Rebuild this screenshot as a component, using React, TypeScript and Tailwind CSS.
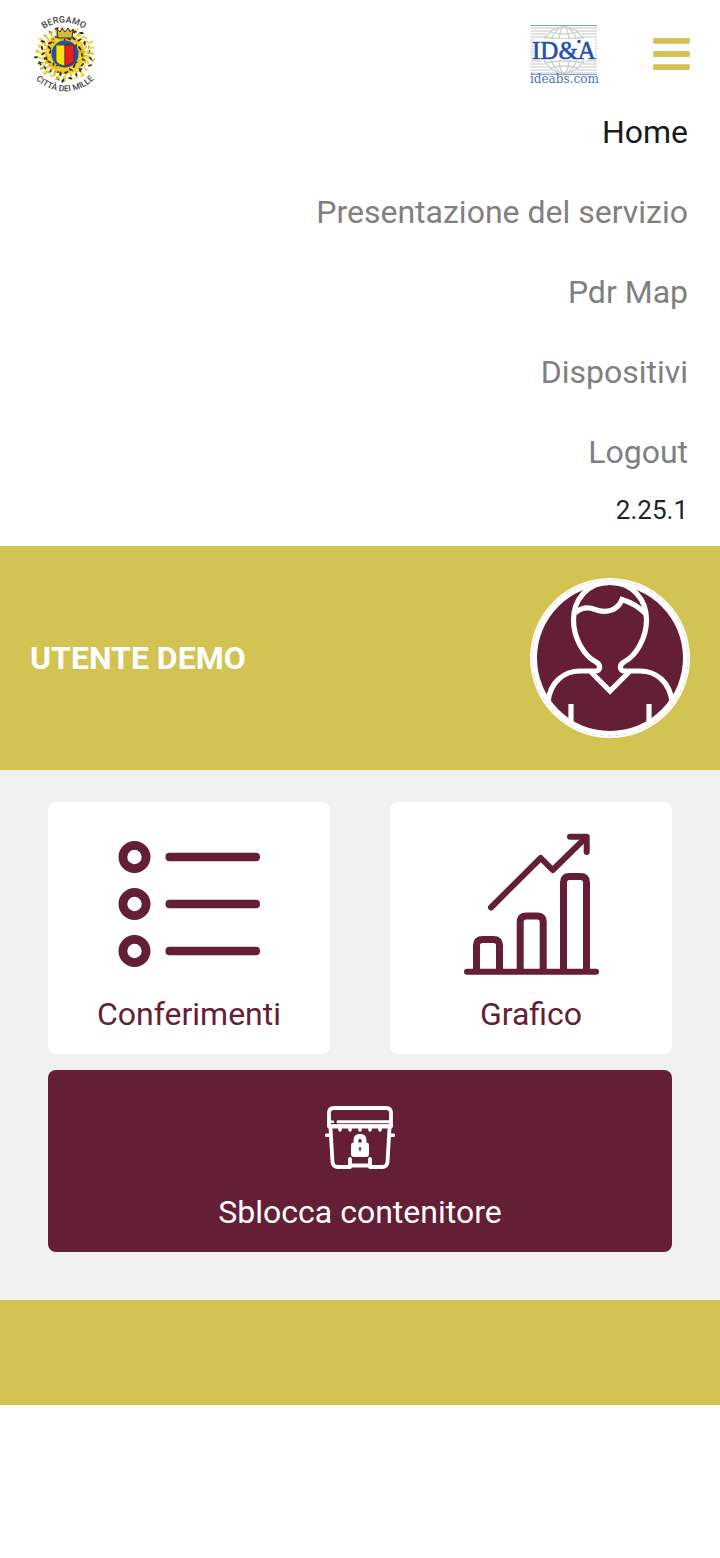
import React from 'react';
import { FaBars } from 'react-icons/fa';

interface NavLink {
  label: string;
  active?: boolean;
}

const navLinks: NavLink[] = [
  { label: 'Home', active: true },
  { label: 'Presentazione del servizio' },
  { label: 'Pdr Map' },
  { label: 'Dispositivi' },
  { label: 'Logout' },
];

const leafColors = ['#f2d22e', '#f5dc4a', '#2a2618', '#e9c92a', '#f2d22e', '#d9b41c', '#4a4228'];

// oak and laurel wreath around the shield
const leaves = Array.from({ length: 190 }, (_, i) => {
  const angle = i * 2.4;
  const radius = 14 + ((i * 37) % 16);
  return {
    x: 33 + radius * Math.cos(angle),
    y: 39 + radius * 0.92 * Math.sin(angle),
    turn: (i * 67) % 180,
    color: leafColors[i % leafColors.length],
  };
});

const CityCrest: React.FC = () => (
  <svg viewBox="0 0 66 80" className="h-20 w-[66px]" role="img" aria-label="Comune di Bergamo">
    <defs>
      <path id="crest-top" d="M3 24 A35 35 0 0 1 61 24" />
      <path id="crest-bottom" d="M1 62 A41 41 0 0 0 65 62" />
    </defs>
    <g transform="translate(0 1)">
      <circle cx="33" cy="39" r="20" fill="#e9c92a" />
      {leaves.map((leaf, i) => (
        <ellipse
          key={i}
          cx={leaf.x}
          cy={leaf.y}
          rx="2.3"
          ry="1"
          fill={leaf.color}
          transform={`rotate(${leaf.turn} ${leaf.x} ${leaf.y})`}
        />
      ))}
      <path d="M25 14 l3 3 2-4 3 4 3-4 2 4 3-3 -1 9 h-14z" fill="#d9b93a" stroke="#333" strokeWidth="1" />
      <circle cx="33" cy="39" r="13.5" fill="#2450a5" />
      <path d="M24 30 H33 V51 C28 50 24 48 24 44z" fill="#fbe20a" stroke="#5b4a20" strokeWidth="0.8" />
      <path d="M33 30 H42 V44 C42 48 38 50 33 51z" fill="#ec1c24" stroke="#5b2020" strokeWidth="0.8" />
    </g>
    <text fontFamily="Roboto, sans-serif" fontSize="9" fontWeight="500" fill="#444" textAnchor="middle">
      <textPath href="#crest-top" startOffset="50%">BERGAMO</textPath>
    </text>
    <text fontFamily="Roboto, sans-serif" fontSize="8.5" fontWeight="500" fill="#444" textAnchor="middle">
      <textPath href="#crest-bottom" startOffset="50%">CITTÀ DEI MILLE</textPath>
    </text>
  </svg>
);

const IdeabsLogo: React.FC = () => (
  <svg viewBox="0 0 70 62" className="h-[62px] w-[70px]" role="img" aria-label="ID&A ideabs.com">
    {Array.from({ length: 16 }, (_, i) => (
      <path key={i} d={`M0.5 ${5 + i * 3} H67`} stroke="#d8d8d8" strokeWidth="1.4" />
    ))}
    <ellipse cx="34" cy="27" rx="25" ry="23" fill="#fff" />
    <g fill="none" stroke="#cfcfcf" strokeWidth="1.3">
      <ellipse cx="34" cy="27" rx="22" ry="23" />
      <ellipse cx="34" cy="27" rx="14" ry="23" />
      <ellipse cx="34" cy="27" rx="6" ry="23" />
      <path d="M20 9 Q34 13 48 9 M14 14 Q34 18 54 14 M14 40 Q34 36 54 40 M20 45 Q34 41 48 45" />
    </g>
    <rect x="4" y="16" width="61" height="21" fill="#fff" />
    <path d="M0.5 2.5 H67 M0.5 51.5 H67" stroke="#7d9fd8" strokeWidth="1.2" />
    <text
      x="34"
      y="36"
      fontFamily="'Liberation Serif', serif"
      fontSize="25"
      fill="#2352a8"
      stroke="#2352a8"
      strokeWidth="0.6"
      textAnchor="middle"
    >
      ID&amp;A
    </text>
    <circle cx="49" cy="18.5" r="1.8" fill="#2352a8" />
    <text x="0" y="60" fontFamily="'DejaVu Serif', serif" fontSize="12" fill="#4a72bd">
      ideabs.com
    </text>
  </svg>
);

const Avatar: React.FC = () => (
  <svg viewBox="0 0 160 160" className="size-40 shrink-0" role="img" aria-label="Utente">
    <defs>
      <clipPath id="avatar-clip">
        <circle cx="80" cy="80" r="76" />
      </clipPath>
    </defs>
    <circle cx="80" cy="80" r="80" fill="#fff" />
    <circle cx="80" cy="80" r="78" fill="none" stroke="#cdbcc4" strokeWidth="0.5" strokeDasharray="5 3" />
    <circle cx="80" cy="80" r="73" fill="#641e36" />
    <g fill="none" stroke="#fff" strokeWidth="5.2" clipPath="url(#avatar-clip)">
      <path d="M80 4.5 C57 4.5 43.5 22 43.5 42 C43.500 60 54 78 66 84 C71 87 71 93 65 93 H50 C34 93 20 104 18 124" />
      <path d="M80 4.5 C103 4.5 116.5 22 116.5 42 C116.5 60 106 78 94 84 C89 87 89 93 95 93 H110 C126 93 140 104 142 124" />
      <path d="M45 35 C52 29 59 29 65 31.5 C77 36 88 32 92 21.500 C100 24 108 28 116 36" />
      <path d="M61 94 L80 113 L99 94" />
      <path d="M41 126 V150 M119 126 V150" />
    </g>
  </svg>
);

const ListIcon: React.FC = () => (
  <svg viewBox="0 0 142 140" className="h-[140px] w-[142px]" aria-hidden="true">
    {[23, 70, 117].map((y) => (
      <g key={y}>
        <circle cx="16.5" cy={y} r="11.6" fill="none" stroke="#641e36" strokeWidth="8.8" />
        <rect x="47.5" y={y - 4.3} width="94.5" height="8.6" rx="4" fill="#641e36" />
      </g>
    ))}
  </svg>
);

const ChartIcon: React.FC = () => (
  <svg
    viewBox="0 0 142 140"
    className="h-[140px] w-[142px] overflow-visible"
    fill="none"
    stroke="#641e36"
    strokeLinecap="round"
    strokeLinejoin="round"
    aria-hidden="true"
  >
    <path d="M7 137.7 H136" strokeWidth="6" />
    <g strokeWidth="7" strokeLinecap="butt">
      <path d="M16.5 137 V111.5 Q16.5 105.5 22.5 105.5 H33.5 Q39.5 105.5 39.5 111.5 V137" />
      <path d="M60.2 137 V88 Q60.2 82 66.2 82 H77.2 Q83.2 82 83.2 88 V137" />
      <path d="M103.5 137 V48.5 Q103.5 42.5 109.5 42.5 H120.5 Q126.5 42.5 126.5 48.5 V137" />
    </g>
    <path d="M31 73.5 L80.7 24 L92.7 36 L126 3.3" strokeWidth="6" />
    <path d="M110 2.8 H126.7 V18" strokeWidth="6" />
  </svg>
);

const LockedBinIcon: React.FC = () => (
  <svg
    viewBox="0 0 70 70"
    className="size-[70px]"
    fill="none"
    stroke="#fff"
    strokeWidth="3.8"
    strokeLinecap="round"
    strokeLinejoin="round"
    aria-hidden="true"
  >
    <path d="M4 24.5 V11 Q4 6 9 6 H61 Q66 6 66 11 V24.5 Z" />
    <path d="M13 19.7 H65" strokeWidth="3" />
    <path d="M5 19.7 H8" strokeWidth="2.5" />
    <path d="M5 22.5 H65" strokeWidth="0.8" />
    <path d="M15 25 V28 M25 25 V28 M35 25 V28 M45 25 V28 M55 25 V28" strokeWidth="3.5" />
    <path d="M5.5 26 L7.5 60 Q8 65 13 65 H25 V57 M64.5 26 L62.5 60 Q62 65 57 65 H45 V57" />
    <path d="M25 63.5 H45" strokeWidth="4" />
    <path d="M1.5 33.3 H5 M65 33.3 H68.5" strokeWidth="3.5" />
    <path d="M31 42 V38 Q31 34.5 35 34.5 Q39 34.5 39 38 V42" strokeWidth="4.8" />
    <rect x="26" y="40.5" width="18" height="14.500" rx="3" fill="#fff" stroke="none" />
    <circle cx="35" cy="46.5" r="1.3" fill="#641e36" stroke="none" />
    <path d="M35 47 V49" stroke="#641e36" strokeWidth="1" />
  </svg>
);

const App: React.FC = () => {
  return (
    <div className="bg-white font-['Roboto',sans-serif] text-[32px] leading-[48px]">
      <header>
        <div className="flex items-center justify-between px-[30px] pt-4">
          <a href="#" className="flex h-[76px] items-center pl-0.5">
            <CityCrest />
          </a>
          <div className="flex items-center gap-[53px]">
            <IdeabsLogo />
            <button type="button" aria-label="Menu" aria-expanded="true" className="text-[#d2c353]">
              <FaBars className="h-[42px] w-[37px]" />
            </button>
          </div>
        </div>
        <nav className="px-8 pb-[18px] text-right">
          <ul>
            {navLinks.map((link) => (
              <li key={link.label}>
                <a
                  href="#"
                  aria-current={link.active ? 'page' : undefined}
                  className={`block py-4 ${link.active ? 'text-[#1a1a1a]' : 'text-[#808080]'}`}
                >
                  {link.label}
                </a>
              </li>
            ))}
          </ul>
          <p className="text-[26px] leading-9 text-[#212529]">2.25.1</p>
        </nav>
      </header>

      <main>
        <section className="flex items-center justify-between bg-[#d2c353] px-[30px] py-8">
          <h1 className="font-bold text-white">UTENTE DEMO</h1>
          <Avatar />
        </section>

        <section className="flex flex-col gap-4 bg-[#f1f1f1] px-12 pt-8 pb-12">
          <div className="grid grid-cols-2 gap-[60px]">
            <button type="button" className="flex flex-col items-center gap-4 rounded-lg bg-white pt-8 pb-4 text-[#641e36]">
              <ListIcon />
              <span>Conferimenti</span>
            </button>
            <button type="button" className="flex flex-col items-center gap-4 rounded-lg bg-white pt-8 pb-4 text-[#641e36]">
              <ChartIcon />
              <span>Grafico</span>
            </button>
          </div>
          <button type="button" className="flex flex-col items-center gap-4 rounded-lg bg-[#641e36] pt-8 pb-4 text-white">
            <LockedBinIcon />
            <span>Sblocca contenitore</span>
          </button>
        </section>
      </main>

      <footer className="h-[105px] bg-[#d2c353]" />
    </div>
  );
};

export default App;
